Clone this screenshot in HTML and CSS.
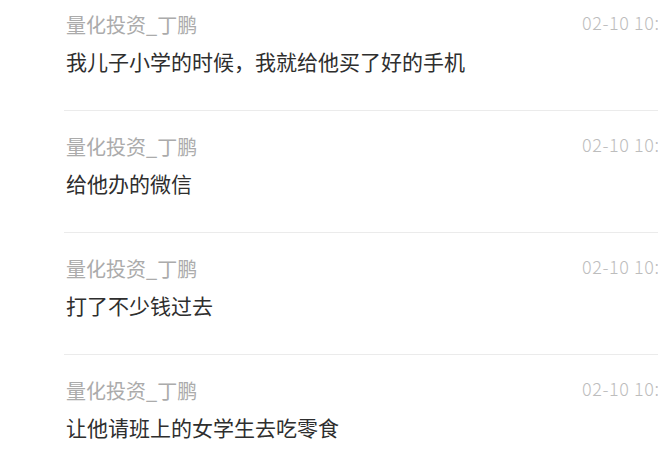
FILE: index.html
```html
<!DOCTYPE html>
<html lang="zh-CN">
<head>
<meta charset="utf-8">
<title>评论</title>
<link rel="stylesheet" href="styles.css">
</head>
<body>
<ul class="comments">
  <li class="comment">
    <div class="head"><span class="name">量化投资_丁鹏</span><span class="time">02-10 10:</span></div>
    <p class="text">我儿子小学的时候，我就给他买了好的手机</p>
  </li>
  <li class="comment">
    <div class="head"><span class="name">量化投资_丁鹏</span><span class="time">02-10 10:</span></div>
    <p class="text">给他办的微信</p>
  </li>
  <li class="comment">
    <div class="head"><span class="name">量化投资_丁鹏</span><span class="time">02-10 10:</span></div>
    <p class="text">打了不少钱过去</p>
  </li>
  <li class="comment">
    <div class="head"><span class="name">量化投资_丁鹏</span><span class="time">02-10 10:</span></div>
    <p class="text">让他请班上的女学生去吃零食</p>
  </li>
</ul>
</body>
</html>
```

FILE: styles.css
```css
html, body {
  margin: 0;
  padding: 0;
  background: #ffffff;
  overflow: hidden;
}
body {
  width: 658px;
  height: 460px;
  font-family: "Noto Sans CJK SC", "Noto Sans", sans-serif;
}
.comments {
  list-style: none;
  margin: -11px 0 0 0;
  padding: 0 0 0 64px;
  width: 594px;
}
.comment {
  padding: 23px 0 35px 0;
  border-bottom: 1px solid #ebebeb;
}
.head {
  display: grid;
  grid-template-columns: 518px auto;
  align-items: center;
  height: 26px;
  white-space: nowrap;
}
.name {
  font-size: 20px;
  line-height: 26px;
  color: #ababab;
  padding-left: 2px;
}
.time {
  font-size: 18px;
  line-height: 26px;
  letter-spacing: 0.6px;
  color: #bdbdbd;
  font-weight: 300;
  position: relative;
  top: -3px;
}
.text {
  margin: 9px 0 0 0;
  padding-left: 2px;
  font-size: 21px;
  line-height: 28px;
  color: #2e2e2e;
  white-space: nowrap;
}
```
